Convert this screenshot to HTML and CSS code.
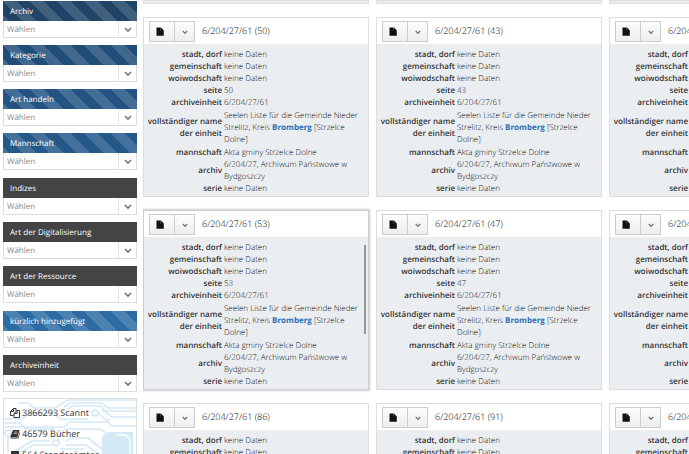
FILE: index.html
```html
<!DOCTYPE html>
<html lang="de">
  <head>
    <meta charset="UTF-8">
    <meta name="viewport" content="width=device-width, initial-scale=1.0">
    <title>Archiv</title>
    <link rel="stylesheet" href="styles.css">
  </head>
  <body>
    <svg class="sprite" aria-hidden="true">
      <symbol id="chevron" viewBox="0 0 8 6"><path d="M1 1 L4 4 L7 1" fill="none" stroke="currentColor" stroke-width="1.7"/></symbol>
      <symbol id="file" viewBox="0 0 8 9"><path d="M0.5 0.5 H4.8 V3.6 H7.8 V8.8 H0.5 Z M5 0.5 L7.8 3.4 H5 Z" fill="currentColor"/></symbol>
    </svg>

    <div class="page">
      <aside class="sidebar">
        <div class="filters" id="filters"></div>
        <div class="stats">
          <svg class="circuit" viewBox="0 0 132 80" preserveAspectRatio="xMidYMin slice" aria-hidden="true">
            <g fill="none" stroke="#d3e9f6" stroke-width="1.6">
              <path d="M14 4 L24 4 L30 9 L52 9 L58 4 L64 1 L133 1"/>
              <path d="M60 8 L66 4 L98 4 L104 9 L133 9"/>
              <path d="M64 10 L68 7 L96 7 L102 12 L133 12"/>
              <path d="M0 20 L18 20 L26 14 L50 14 L56 20 L84 20"/>
              <path d="M94 14 L102 21 L106 21 M98 11 L108 18 L133 18"/>
              <path d="M0 28 L60 28 L66 23 L104 23 L108 27 L133 27"/>
              <path d="M54 41 L54 37 L62 30 L96 30 L102 34"/>
              <path d="M0 24 L16 24 L22 30 L50 30"/>
              <path d="M4 37 L4 54 M0 62 L30 46 L49 46 M8 54 L28 42 L46 42"/>
              <path d="M62 42 L66 39 L84 39 L98 50 M62 46 L82 46 L98 58 M56 50 L80 50"/>
              <circle cx="91" cy="14" r="3"/>
              <circle cx="52" cy="44" r="3"/>
              <circle cx="4" cy="34" r="3"/>
            </g>
            <path d="M98 38 L104 33 H129 V80 H98 Z" fill="#d3e9f6"/>
            <path d="M112 36 H122 L126 40 V80" fill="none" stroke="#fff" stroke-width="1.4"/>
          </svg>
          <ul class="stats-list">
            <li>
              <svg viewBox="0 0 10 10"><path d="M3.5 0.5 H6 V3 M3.5 0.5 L0.5 3.5 V7.5 H3.5 M0.5 3.5 H3.5 V0.5 M7 2.5 H9.5 V9.5 H4 V5.5 L7 2.5 V5.5 H4" fill="none" stroke="currentColor"/></svg>
              3866293 Scannt
            </li>
            <li>
              <svg viewBox="0 0 10 10"><path d="M3 1 H9.5 L7.5 8 H1.5 V8.6 H8 L9.6 3 L10 4 L8.4 9.5 H1.2 L0.3 8 Z" fill="currentColor"/><path d="M4 3 H7.5 M3.6 4.6 H7" stroke="#fff" stroke-width="0.6"/></svg>
              46579 Bücher
            </li>
            <li>
              <svg viewBox="0 0 10 10"><path d="M1 1 H9 V10 H1 Z" fill="currentColor"/></svg>
              564 Standesämter
            </li>
          </ul>
        </div>
      </aside>
      <main class="cards" id="cards"></main>
    </div>

    <script src="index.js"></script>
  </body>
</html>
```
FILE: styles.css
```css
* {
  box-sizing: border-box;
}
html, body {
  margin: 0;
  height: 100%;
  overflow: hidden;
  background-color: #fff;
  color: #333;
  font-family: "Open Sans", "Noto Sans", sans-serif;
  font-size: 8px;
  line-height: 12px;
  text-rendering: geometricPrecision;
}
.sprite {
  display: none;
}
.page {
  display: flex;
  gap: 6px;
  height: 100%;
  padding-left: 3px;
}

/* sidebar */
.sidebar {
  flex: 0 0 134px;
  padding-top: 1px;
}
.filters {
  display: flex;
  flex-direction: column;
  gap: 8px;
}
.group {
  display: flex;
  flex-direction: column;
  gap: 7px;
}
.filter-title {
  display: block;
  height: 20px;
  padding: 1px 0 0 7px;
  color: #fff;
  line-height: 20px;
  background-color: #444;
}
.striped {
  background-image: linear-gradient(45deg,
    rgba(255, 255, 255, 0.15) 25%, transparent 25%,
    transparent 50%, rgba(255, 255, 255, 0.15) 50%,
    rgba(255, 255, 255, 0.15) 75%, transparent 75%);
  background-size: 27px 27px;
}
.blue1 { background-color: #1f4467; }
.blue2 { background-color: #204d78; }
.blue3 { background-color: #225383; }
.blue4 { background-color: #235889; }
.blue5 { background-color: #2d6ca2; }
.select {
  display: grid;
  grid-template-columns: 1fr 18px;
  height: 17px;
  border: 1px solid #ddd;
  border-top: 0;
}
.select select {
  grid-area: 1 / 1 / 2 / 3;
  min-width: 0;
  margin: 0;
  padding: 1px 3px 0;
  border: 0;
  appearance: none;
  background: transparent;
  color: #888;
  font: inherit;
  text-rendering: inherit;
}
.select .arrow {
  grid-area: 1 / 2;
  display: flex;
  align-items: center;
  justify-content: center;
  padding-top: 2px;
  border-left: 1px solid #e5e5e5;
  color: #777;
  pointer-events: none;
}
.arrow svg {
  width: 8px;
  height: 6px;
}
.stats {
  position: relative;
  margin-top: 6px;
  height: 120px;
  border: 1px solid #ddd;
  overflow: hidden;
}
.circuit {
  position: absolute;
  top: 0;
  left: 0;
  width: 100%;
}
.stats-list {
  position: relative;
  margin: 0;
  padding: 3px 6px;
  list-style: none;
  color: #333;
  font-size: 9px;
  line-height: 21px;
}
.stats-list li {
  display: flex;
  align-items: center;
  gap: 2px;
}
.stats-list svg {
  width: 10px;
  height: 10px;
}

/* cards */
.cards {
  flex: 1;
  min-width: 0;
  height: 100%;
  overflow: hidden;
  display: grid;
  grid-template-columns: repeat(3, minmax(226px, 1fr));
  align-content: start;
  gap: 13px 7px;
}
.card {
  position: relative;
  border: 1px solid #ddd;
  background-color: #ebeef1;
}
.card.active {
  border-color: #ccc;
  box-shadow: 0 0 2px 1px #ccc;
}
.card.active::after {
  content: "";
  position: absolute;
  top: 34px;
  right: 2px;
  width: 2px;
  height: 89px;
  background-color: #999;
}
.tail {
  height: 4px;
}
.card-head {
  display: flex;
  align-items: center;
  gap: 7px;
  height: 26px;
  padding-left: 5px;
  background-color: #fff;
}
.card-title {
  margin: 0;
  color: #000;
  font-size: 9px;
  font-weight: 300;
}
.buttons {
  display: flex;
}
.button {
  display: flex;
  align-items: center;
  justify-content: center;
  width: 26px;
  height: 21px;
  margin: 0;
  padding: 0 5px 0 0;
  border: 1px solid #ccc;
  background: linear-gradient(#fcfcfc, #eee);
  color: #111;
}
.button svg {
  width: 8px;
  height: 9px;
}
.button.toggle {
  width: 20px;
  padding: 2px 0 0;
  border-left: 0;
  color: #777;
}
.button.toggle svg {
  width: 6px;
  height: 5px;
}
.card-body {
  padding: 5px 6px 1px 3px;
}
.data {
  width: 100%;
  table-layout: fixed;
  border-collapse: collapse;
}
.data th,
.data td {
  padding: 0;
  vertical-align: middle;
}
.data th {
  width: 77px;
  padding-right: 2px;
  font-weight: 600;
  text-align: right;
}
.data td {
  color: #111;
  font-weight: 300;
}
.data .unit td {
  padding: 1px 0;
}
.data a {
  color: #2a6fb5;
  font-weight: 700;
  text-decoration: none;
}
```
FILE: index.js
```js
const groups = [
  [['Archiv', 'striped blue1'], ['Kategorie', 'striped blue2'], ['Art handeln', 'striped blue3'], ['Mannschaft', 'striped blue4']],
  [['Indizes', ''], ['Art der Digitalisierung', ''], ['Art der Ressource', '']],
  [['kürzlich hinzugefügt', 'striped blue5'], ['Archiveinheit', '']]
];
const pages = [50, 43, 44, 53, 47, 48, 86, 91, 92];
const activePage = 53;

function renderFilters() {
  document.getElementById('filters').innerHTML = groups.map((group, g) => `
    <div class="group">${group.map(([title, look], i) => `
      <div class="filter">
        <label class="filter-title ${look}" for="filter-${g}-${i}">${title}</label>
        <div class="select">
          <select id="filter-${g}-${i}"><option>Wählen</option></select>
          <span class="arrow"><svg><use href="#chevron"/></svg></span>
        </div>
      </div>`).join('')}
    </div>`).join('');
}

function renderCards() {
  // bottoms of the row scrolled out of view
  const tails = '<div class="card tail"></div>'.repeat(3);
  document.getElementById('cards').innerHTML = tails + pages.map(page => `
    <article class="card ${page === activePage ? 'active' : ''}">
      <header class="card-head">
        <div class="buttons">
          <button class="button" aria-label="Öffnen"><svg><use href="#file"/></svg></button>
          <button class="button toggle" aria-label="Mehr"><svg><use href="#chevron"/></svg></button>
        </div>
        <h2 class="card-title">6/204/27/61 (${page})</h2>
      </header>
      <div class="card-body">
        <table class="data">
          <tr><th>stadt, dorf</th><td>keine Daten</td></tr>
          <tr><th>gemeinschaft</th><td>keine Daten</td></tr>
          <tr><th>woiwodschaft</th><td>keine Daten</td></tr>
          <tr><th>seite</th><td>${page}</td></tr>
          <tr><th>archiveinheit</th><td>6/204/27/61</td></tr>
          <tr class="unit"><th>vollständiger name der einheit</th><td>Seelen Liste für die Gemeinde Nieder Strelitz, Kreis <a href="#">Bromberg</a> [Strzelce Dolne]</td></tr>
          <tr><th>mannschaft</th><td>Akta gminy Strzelce Dolne</td></tr>
          <tr><th>archiv</th><td>6/204/27, Archiwum Państwowe w Bydgoszczy</td></tr>
          <tr><th>serie</th><td>keine Daten</td></tr>
        </table>
      </div>
    </article>`).join('');
}

renderFilters();
renderCards();
```
